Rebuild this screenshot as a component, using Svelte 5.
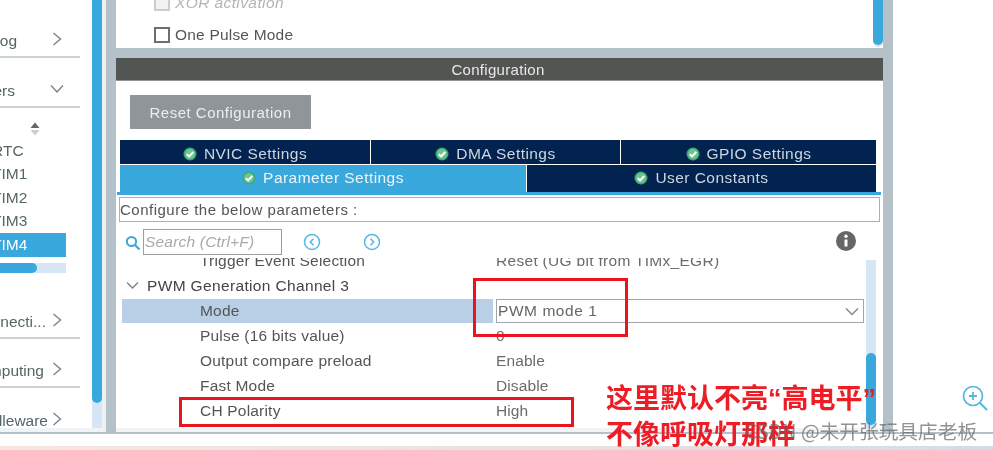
<script>
  const groups = [
    { text: 'Trigger Event Selection', value: 'Reset (UG bit from TIMx_EGR)' }
  ]
  const params = [
    { text: 'Pulse (16 bits value)', value: '0' },
    { text: 'Output compare preload', value: 'Enable' },
    { text: 'Fast Mode', value: 'Disable' },
    { text: 'CH Polarity', value: 'High' }
  ]
  const timers = ['RTC', 'TIM1', 'TIM2', 'TIM3']
  const right = 'M3.5 1 10.5 7 3.5 13'
  const down = 'M1 3.5 7 10 13 3.5'
</script>

{#snippet check()}
  <svg class="check" width="14" height="14" viewBox="0 0 14 14">
    <circle cx="7" cy="7" r="6.5" fill="#3fa873" />
    <circle cx="7" cy="7" r="5" fill="#6cc596" />
    <path d="M3.8 7.2 6.1 9.4 10.3 5" fill="none" stroke="#fff" stroke-width="2" />
  </svg>
{/snippet}

{#snippet chevron(d)}
  <svg class="chev" width="14" height="14" viewBox="0 0 14 14">
    <path d={d} fill="none" stroke="#7d8288" stroke-width="1.4" />
  </svg>
{/snippet}

<div class="page">
  <div class="work">
    <aside class="side">
      <div class="cat first"><span class="clip">Analog</span>{@render chevron(right)}</div>
      <div class="cat open"><span class="clip">Timers</span>{@render chevron(down)}</div>
      <div class="sort">
        <svg width="12" height="16" viewBox="0 0 12 16">
          <path d="M6 1.5 10.5 7H1.5Z" fill="#666" />
          <path d="M6 14.5 10.5 9H1.5Z" fill="#cfcfcf" />
        </svg>
      </div>
      <ul class="timers">
        {#each timers as t}
          <li><span class="t">{t}</span></li>
        {/each}
        <li class="sel"><span class="t">TIM4</span></li>
      </ul>
      <div class="hbar"><div class="hthumb"></div></div>
      <div class="cat conn"><span class="clip">Connecti...</span>{@render chevron(right)}</div>
      <div class="cat comp"><span class="clip">Computing</span>{@render chevron(right)}</div>
      <div class="cat mid"><span class="clip">Middleware</span>{@render chevron(right)}</div>
    </aside>
    <div class="vbar side-bar"><div class="vthumb"></div></div>
    <div class="strip"></div>
    <div class="gutter"></div>

    <main class="main">
      <section class="top">
        <div class="opts">
          <label class="opt off"><span class="box"></span><em>XOR activation</em></label>
          <label class="opt"><span class="box"></span>One Pulse Mode</label>
        </div>
        <div class="top-bar"></div>
      </section>
      <div class="band"></div>
      <div class="title">Configuration</div>
      <section class="config">
        <button class="reset">Reset Configuration</button>
        <div class="tabs">
          <div class="tab-row one">
            <div class="tab nvic">{@render check()}NVIC Settings</div>
            <div class="tab dma">{@render check()}DMA Settings</div>
            <div class="tab gpio">{@render check()}GPIO Settings</div>
          </div>
          <div class="tab-row two">
            <div class="tab active">{@render check()}Parameter Settings</div>
            <div class="tab">{@render check()}User Constants</div>
          </div>
        </div>
        <div class="rule"></div>
        <div class="hint">Configure the below parameters :</div>
        <div class="tools">
          <svg class="mag" width="16" height="16" viewBox="0 0 16 16">
            <circle cx="6.5" cy="6.5" r="4.6" fill="none" stroke="#38a8dd" stroke-width="2" />
            <path d="M10 10 14.5 14.5" stroke="#38a8dd" stroke-width="2.2" />
          </svg>
          <div class="search">Search (Ctrl+F)</div>
          <svg class="nav prev" width="18" height="18" viewBox="0 0 18 18">
            <circle cx="9" cy="9" r="7.5" fill="none" stroke="#5cb8e3" stroke-width="1.6" />
            <path d="M10.5 5.8 7.3 9 10.5 12.2" fill="none" stroke="#5cb8e3" stroke-width="1.6" />
          </svg>
          <svg class="nav next" width="18" height="18" viewBox="0 0 18 18">
            <circle cx="9" cy="9" r="7.5" fill="none" stroke="#5cb8e3" stroke-width="1.6" />
            <path d="M7.5 5.8 10.7 9 7.5 12.2" fill="none" stroke="#5cb8e3" stroke-width="1.6" />
          </svg>
          <svg class="info" width="20" height="20" viewBox="0 0 20 20">
            <circle cx="10" cy="10" r="10" fill="#666" />
            <circle cx="10" cy="5.2" r="1.7" fill="#fff" />
            <path d="M10 8.5V15.5" stroke="#fff" stroke-width="3" />
          </svg>
        </div>
        <div class="tree-wrap">
          <div class="tree">
            {#each groups as r}
              <div class="row cut"><span class="name">{r.text}</span><span class="val">{r.value}</span></div>
            {/each}
            <div class="row group">
              <svg width="13" height="13" viewBox="0 0 13 13">
                <path d="M1 3.5 6.5 9 12 3.5" fill="none" stroke="#7d8288" stroke-width="1.3" />
              </svg>
              <span>PWM Generation Channel 3</span>
            </div>
            <div class="row mode">
              <span class="name">Mode</span>
              <div class="select">PWM mode 1
                <svg width="14" height="9" viewBox="0 0 14 9">
                  <path d="M1 1.5 7 7.5 13 1.5" fill="none" stroke="#888" stroke-width="1.5" />
                </svg>
              </div>
            </div>
            {#each params as r}
              <div class="row"><span class="name">{r.text}</span><span class="val">{r.value}</span></div>
            {/each}
          </div>
          <div class="tree-bar"><div class="tree-thumb"></div></div>
        </div>
      </section>
    </main>

    <div class="gutter"></div>
    <div class="right">
      <svg class="zoom" width="26" height="26" viewBox="0 0 26 26">
        <circle cx="11" cy="11" r="9.5" fill="none" stroke="#55b6e2" stroke-width="1.7" />
        <path d="M11 7V15M7 11H15" stroke="#55b6e2" stroke-width="1.8" />
        <path d="M18 18 25 25" stroke="#55b6e2" stroke-width="2" />
      </svg>
    </div>
  </div>
  <div class="floor"></div>
  <div class="blank"></div>
  <div class="under"></div>

  <div class="mark a"></div>
  <div class="mark b"></div>
  <div class="note">
    <div>这里默认不亮<span class="q">“</span>高电平<span class="q">”</span></div>
    <div>不像呼吸灯那样</div>
  </div>
  <div class="wm">CSDN @未开张玩具店老板</div>
</div>

<style>
  :global(body) {
    margin: 0;
    background: #fff;
  }
  .page {
    position: relative;
    width: 993px;
    height: 450px;
    overflow: hidden;
    font-family: "Liberation Sans", Arial, sans-serif;
    font-size: 15.5px;
    color: #555;
    background: #fff;
    display: flex;
    flex-direction: column;
    filter: blur(0.35px);
  }
  .work {
    display: flex;
    height: 432px;
    background: #f0f4f6;
  }
  .floor {
    height: 2px;
    background: #b5c1c9;
  }
  .blank {
    height: 12px;
  }
  .under {
    height: 4px;
    background: linear-gradient(90deg, #f4e6db 0%, #eee3dc 40%, #d3dde6 100%);
  }

  /* left list */
  .side {
    width: 92px;
    height: 428px;
    background: #fff;
    overflow: hidden;
    flex: none;
  }
  .cat {
    width: 80px;
    height: 24px;
    display: flex;
    align-items: center;
    border-bottom: 2px solid #c9d2d8;
    box-sizing: content-box;
  }
  .first { margin-top: 29px; padding-bottom: 3px; }
  .open { margin-top: 21px; padding-bottom: 3px; }
  .conn { margin-top: 37px; padding-bottom: 3px; }
  .comp { margin-top: 20px; padding-bottom: 3px; }
  .mid { margin-top: 21px; border-bottom: 0; }
  .chev {
    flex: none;
    margin-top: -4px;
  }
  .clip {
    flex: none;
    width: 50px;
    box-sizing: border-box;
    display: flex;
    justify-content: flex-end;
    white-space: nowrap;
    overflow: hidden;
    color: #566;
  }
  .first .clip { padding-right: 33px; }
  .open .clip { padding-right: 35px; }
  .conn .clip { padding-right: 4px; }
  .comp .clip { padding-right: 6px; }
  .mid .clip { padding-right: 2px; }
  .sort {
    height: 16px;
    margin-top: 13px;
    padding-left: 29px;
  }
  .timers {
    list-style: none;
    margin: 2px 0 0;
    padding: 0;
    width: 66px;
  }
  .timers li {
    height: 23.5px;
    display: flex;
    align-items: center;
    overflow: hidden;
  }
  .timers li.sel {
    height: 24px;
    background: #38a8dd;
    color: #fff;
  }
  .t {
    margin-left: -8px;
    color: #566;
  }
  .sel .t { color: #fff; }
  .hbar {
    width: 66px;
    height: 10px;
    margin-top: 6px;
    background: #d6e6f5;
  }
  .hthumb {
    width: 37px;
    height: 10px;
    background: #38a8dd;
    border-radius: 0 5px 5px 0;
  }
  .vbar {
    width: 10px;
    height: 428px;
    flex: none;
    background: #d6e6f5;
  }
  .vthumb {
    height: 403px;
    background: #38a8dd;
    border-radius: 0 0 5px 5px;
  }
  .strip {
    width: 4px;
    flex: none;
    background: #eef2f5;
  }
  .gutter {
    width: 10px;
    flex: none;
    background: #b5c1c9;
  }

  /* middle */
  .main {
    width: 767px;
    flex: none;
    height: 428px;
    display: flex;
    flex-direction: column;
    background: #fff;
  }
  .top {
    height: 48px;
    position: relative;
    display: flex;
    overflow: hidden;
  }
  .opts {
    flex: 1;
    margin-top: -9px;
    padding-left: 38px;
  }
  .opt {
    display: flex;
    align-items: center;
    gap: 5px;
    height: 24px;
    margin-bottom: 8px;
    color: #555;
    letter-spacing: 0.2px;
  }
  .opt.off { color: #b5b5b5; }
  .opt em { letter-spacing: 0.4px; }
  .box {
    width: 12px;
    height: 12px;
    border: 2px solid #6e6e6e;
    background: #fff;
  }
  .off .box {
    border-color: #ccc;
    background: #f2f2f2;
  }
  .top-bar {
    width: 10px;
    height: 45px;
    background: #38a8dd;
    border-radius: 0 0 5px 5px;
    box-shadow: 0 2px 0 #d6e6f5;
  }
  .band {
    height: 10px;
    background: #b5c1c9;
    flex: none;
  }
  .title {
    height: 22px;
    flex: none;
    background: #535553;
    color: #e8e8e8;
    text-align: center;
    line-height: 23px;
    font-size: 15px;
    letter-spacing: 0.3px;
    padding-right: 3px;
    border-bottom: 1px solid #8f9192;
  }
  .config {
    flex: 1;
    min-height: 0;
    display: flex;
    flex-direction: column;
    padding-top: 14px;
  }
  .reset {
    width: 181px;
    height: 34px;
    margin-left: 14px;
    border: 0;
    padding: 0;
    background: #8f9599;
    color: #eee;
    font: inherit;
    font-size: 15px;
    letter-spacing: 0.5px;
    flex: none;
  }
  .tabs {
    margin: 11px 7px 0 4px;
    flex: none;
  }
  .tab-row {
    display: flex;
    gap: 1px;
  }
  .one { height: 24px; margin-bottom: 1px; }
  .two { height: 27px; }
  .one .tab { padding-top: 3px; box-sizing: border-box; }
  .nvic { width: 250px; }
  .dma { width: 249px; }
  .gpio { flex: 1; }
  .tab {
    background: #022250;
    color: #ced6e0;
    display: flex;
    align-items: center;
    justify-content: center;
    gap: 7px;
    letter-spacing: 0.45px;
  }
  .two .tab { flex: 349; padding-bottom: 2px; box-sizing: border-box; }
  .two .tab.active {
    flex: 406;
    background: #38a8dd;
    color: #eaf6fc;
  }
  .check { flex: none; }
  .rule {
    height: 3px;
    margin: 0 2px 0 1px;
    background: #38a8dd;
    flex: none;
  }
  .hint {
    flex: none;
    height: 23px;
    margin: 2px 3px 0 3px;
    border: 1px solid #aab0b4;
    line-height: 23px;
    padding-left: 0;
    color: #555;
    font-size: 15px;
    letter-spacing: 0.5px;
    white-space: nowrap;
  }
  .tools {
    position: relative;
    flex: none;
    display: flex;
    align-items: center;
    height: 26px;
    margin-top: 7px;
    padding-left: 9px;
  }
  .mag { flex: none; margin-top: 1px; }
  .search {
    height: 24px;
    margin-left: 2px;
    border: 1px solid #9a9fa3;
    line-height: 24px;
    padding-left: 1px;
    box-sizing: content-box;
    width: 136px;
    color: #a9a9a9;
    font-style: italic;
    letter-spacing: 0.2px;
  }
  .nav { flex: none; margin-left: 21px; }
  .nav.next { margin-left: 42px; }
  .info { flex: none; margin-left: auto; margin-right: 27px; margin-top: -2px; }
  .tree-wrap {
    flex: 1;
    min-height: 0;
    margin-top: 3px;
    display: flex;
    padding-right: 7px;
  }
  .tree {
    flex: 1;
    overflow: hidden;
    padding-left: 6px;
  }
  .row {
    height: 25px;
    box-sizing: border-box;
    padding-bottom: 2px;
    display: flex;
    align-items: center;
    padding-left: 78px;
    white-space: nowrap;
    color: #555;
  }
  .row.cut {
    margin-top: -10px;
    margin-bottom: 1px;
    padding-bottom: 0;
  }
  .name {
    width: 296px;
    flex: none;
    letter-spacing: 0.2px;
  }
  .val {
    color: #6b6b6b;
    letter-spacing: 0.1px;
  }
  .cut .val { letter-spacing: 0.3px; }
  .group {
    padding-left: 4px;
    gap: 8px;
    color: #444;
    letter-spacing: 0.35px;
  }
  .mode {
    height: 24px;
    margin-bottom: 1px;
    padding-bottom: 0;
    background: linear-gradient(90deg, #b8cfe6 371px, #fff 371px);
  }
  .select {
    flex: 1;
    height: 24px;
    box-sizing: border-box;
    border: 1px solid #a2a6a9;
    display: flex;
    align-items: center;
    justify-content: space-between;
    padding: 0 4px 0 1px;
    color: #666;
    letter-spacing: 0.55px;
  }
  .tree-bar {
    width: 10px;
    flex: none;
    margin-left: 2px;
    height: 168px;
    margin-top: 2px;
    background: #d6e6f5;
  }
  .tree-thumb {
    margin-top: 93px;
    height: 72px;
    background: #38a8dd;
    border-radius: 5px;
  }

  /* right side */
  .right {
    flex: 1;
    background: #fff;
    position: relative;
  }
  .zoom {
    position: absolute;
    left: 69px;
    top: 385px;
  }

  /* annotations pasted over the screenshot */
  .mark {
    position: absolute;
    box-sizing: border-box;
    border: 3px solid #e9141e;
  }
  .a { left: 473px; top: 278px; width: 155px; height: 59px; }
  .b { left: 179px; top: 397px; width: 395px; height: 30px; }
  .note {
    position: absolute;
    left: 606px;
    top: 380px;
    font-family: "Noto Sans CJK SC", sans-serif;
    font-size: 27px;
    font-weight: 700;
    line-height: 34px;
    color: #ee1c25;
    white-space: nowrap;
  }
  .q { font-family: "Liberation Sans", sans-serif; }
  .wm {
    position: absolute;
    left: 745px;
    top: 417px;
    font-family: "Noto Sans CJK SC", sans-serif;
    font-size: 19.7px;
    line-height: 28px;
    color: rgba(100, 100, 100, 0.7);
    white-space: nowrap;
  }
</style>
